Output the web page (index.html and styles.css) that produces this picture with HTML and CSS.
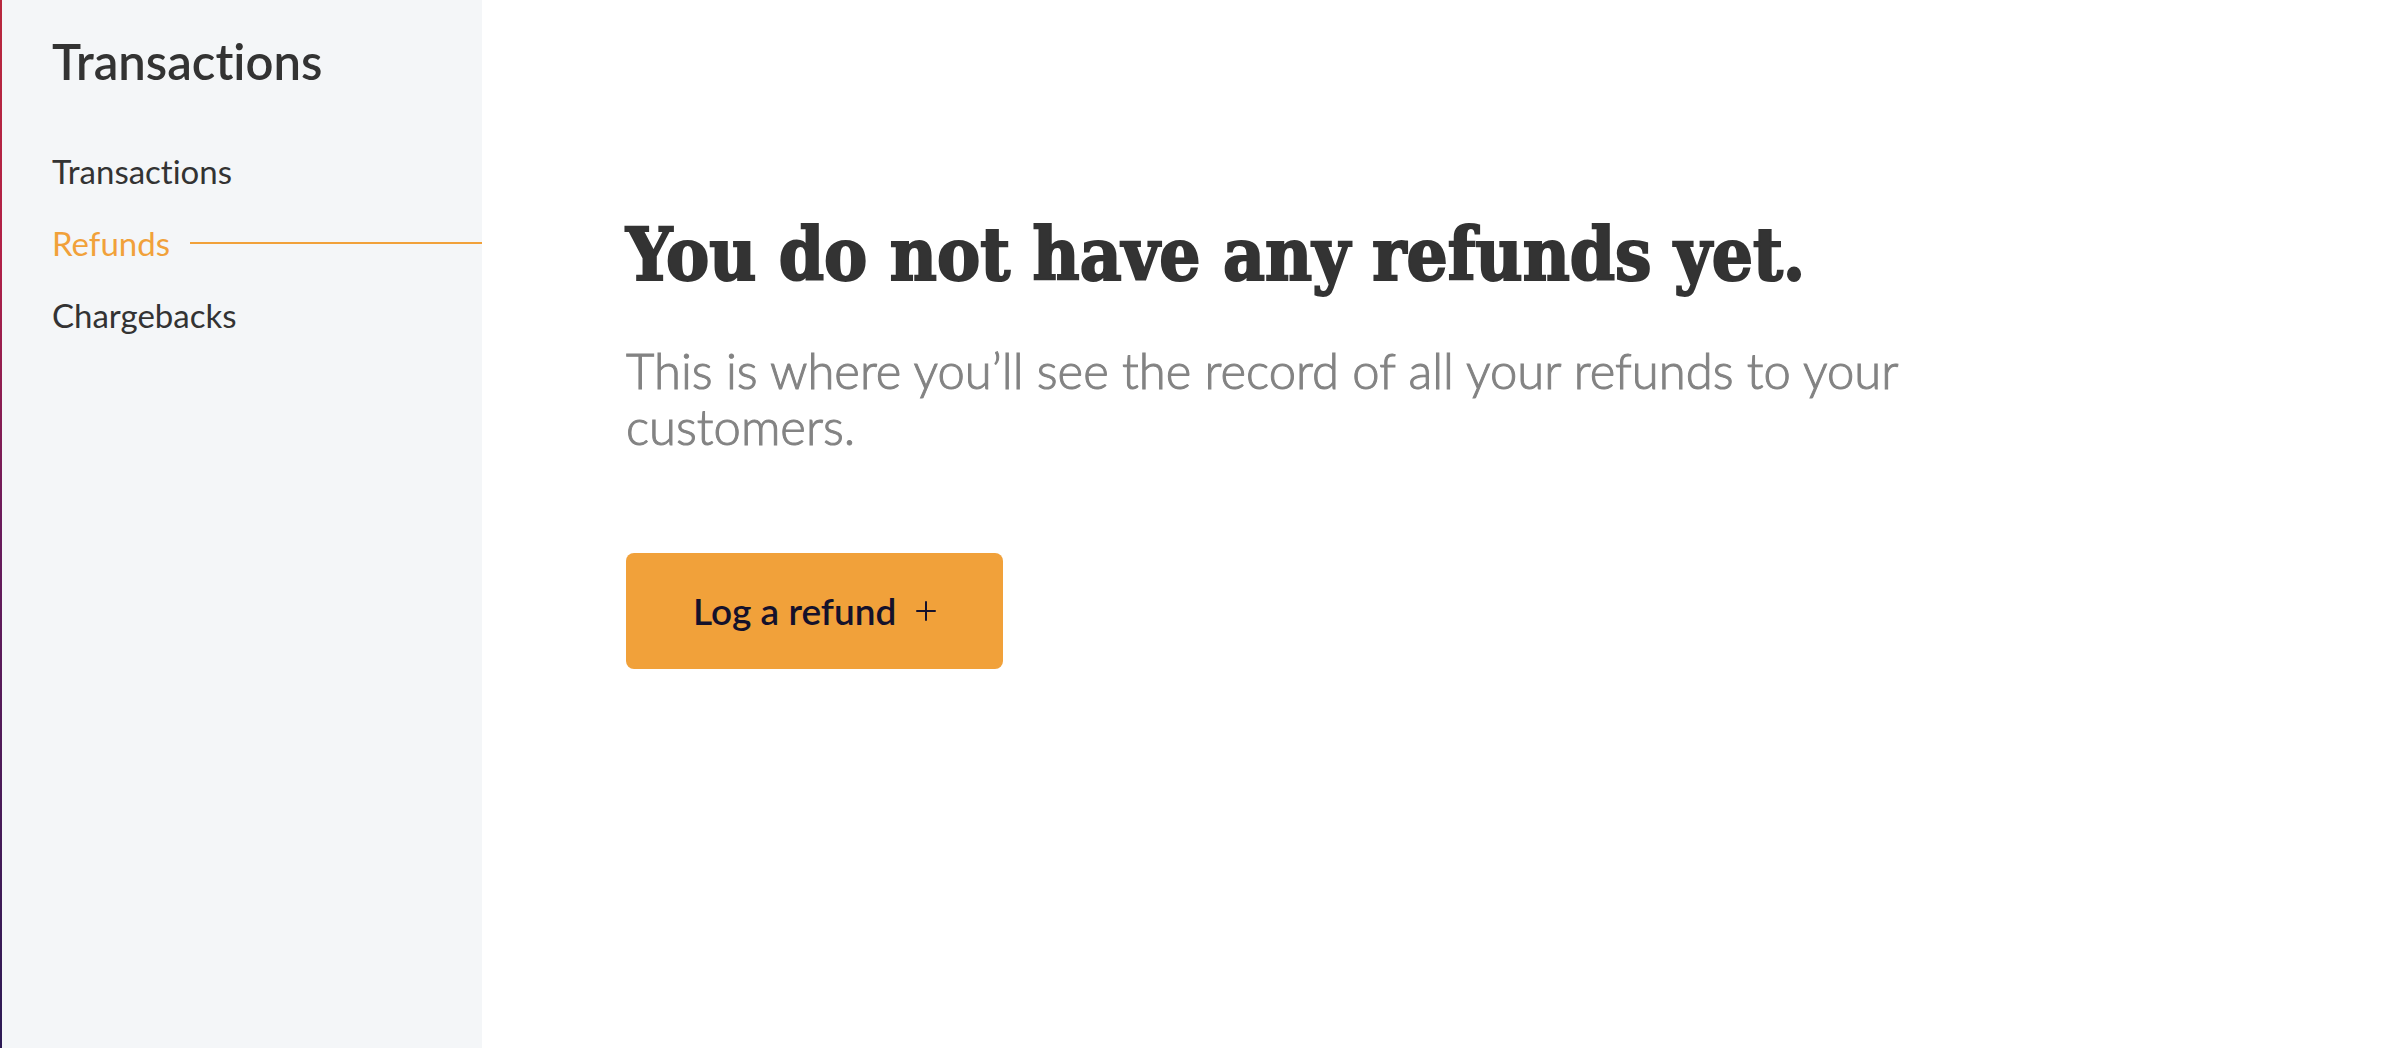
FILE: index.html
```html
<!doctype html>
<html lang="en">
<head>
    <meta charset="UTF-8">
    <meta name="viewport" content="width=device-width, initial-scale=1.0">
    <title>Refunds</title>
    <link rel="stylesheet" href="styles.css">
</head>
<body>

<div class="wrap">
    <aside class="sidebar">
        <h2 class="sidebar-title">Transactions</h2>
        <nav class="nav-menu">
            <a href="#transactions">Transactions</a>
            <a href="#refunds" class="active" aria-current="page">Refunds</a>
            <a href="#chargebacks">Chargebacks</a>
        </nav>
    </aside>

    <main class="main">
        <h1 class="empty-title">You do not have any refunds yet.</h1>
        <p class="empty-text">This is where you’ll see the record of all your refunds to your customers.</p>
        <button type="button" class="btn">
            <span>Log a refund</span>
            <svg class="btn-icon" viewBox="0 0 20 20" aria-hidden="true">
                <path d="M10 1v18M1 10h18"/>
            </svg>
        </button>
    </main>
</div>

</body>
</html>
```
FILE: styles.css
```css
*{
    margin: 0;
    padding: 0;
    box-sizing: border-box;
}

body{
    font-family: Lato, "Open Sans", sans-serif;
    font-variant-ligatures: none;
    color: #333;
    background-color: #fff;
}

a{
    color: inherit;
    text-decoration: none;
}

.wrap{
    display: flex;
    min-height: 100vh;
}

/* sidebar */
.sidebar{
    flex: 0 0 482px;
    padding: 29px 0 0 52px;
    background: linear-gradient(#b8283e, #b02048 25%, #6a1b5c 50%, #2c1a55) 0 0 / 2px 100% no-repeat #f4f6f8;
}

.sidebar-title{
    font-size: 49px;
    line-height: 64px;
    font-weight: 600;
}

.nav-menu{
    display: flex;
    flex-direction: column;
    gap: 24px;
    margin-top: 54px;
}

.nav-menu a{
    display: flex;
    align-items: center;
    gap: 20px;
    font-size: 33px;
    line-height: 48px;
}

.nav-menu .active{
    color: #f1a13a;
}

.nav-menu .active::after{
    content: "";
    flex: 1;
    height: 2px;
    background-color: #f1a13a;
}

/* content */
.main{
    flex: 1;
    padding: 207px 144px 0;
}

.empty-title{
    font-family: "DejaVu Serif Condensed", "DejaVu Serif", serif;
    font-size: 72px;
    line-height: 96px;
    font-weight: 700;
    -webkit-text-stroke: 2px #333;
}

.empty-text{
    max-width: 1300px;
    margin-top: 39px;
    font-size: 49px;
    line-height: 56px;
    font-weight: 300;
    color: #838383;
    -webkit-text-stroke: 1px #838383;
}

.btn{
    display: flex;
    align-items: center;
    gap: 20px;
    margin-top: 99px;
    padding: 34px 67px;
    border: 0;
    border-radius: 8px;
    background-color: #f1a13a;
    color: #15112b;
    font-family: inherit;
    font-size: 37px;
    line-height: 48px;
    font-weight: 600;
    cursor: pointer;
}

.btn-icon{
    width: 20px;
    height: 20px;
    fill: none;
    stroke: currentColor;
    stroke-width: 2;
    stroke-linecap: round;
}
```
